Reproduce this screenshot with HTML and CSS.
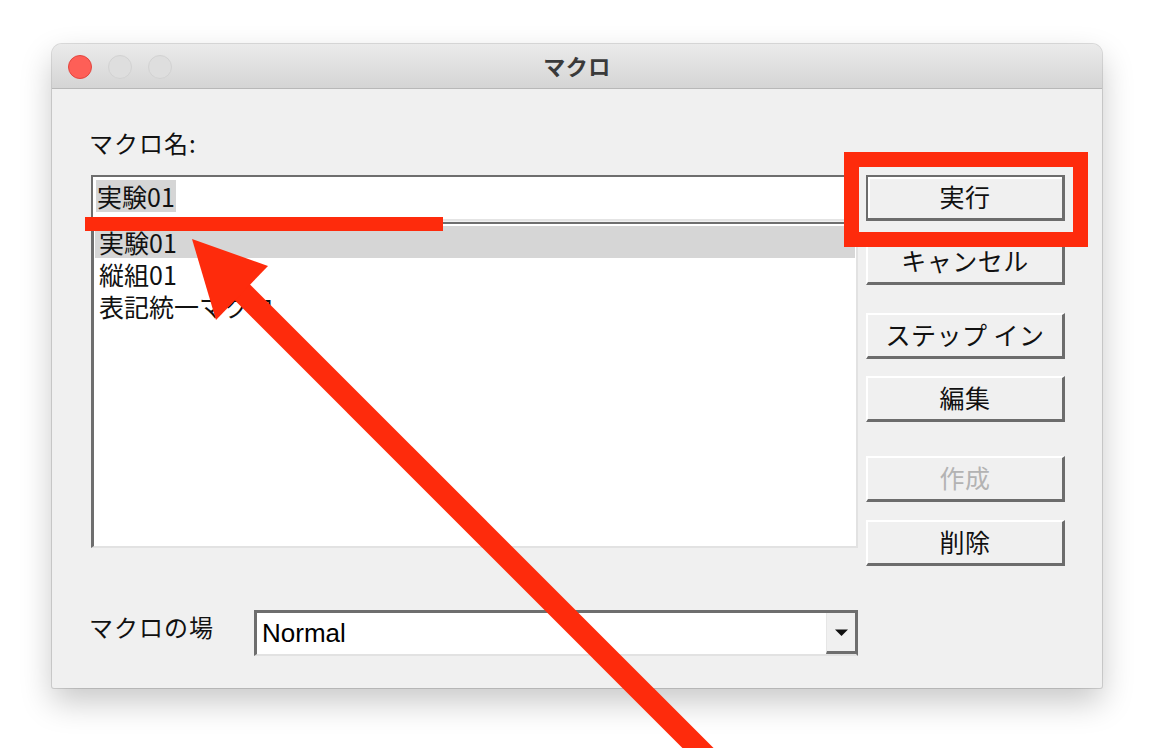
FILE: index.html
```html
<!DOCTYPE html>
<html lang="ja">
<head>
<meta charset="utf-8">
<title>マクロ</title>
<link rel="stylesheet" href="styles.css">
</head>
<body>
<div class="stage">
  <div class="window">
    <div class="titlebar">
      <div class="lights">
        <span class="light close"></span>
        <span class="light"></span>
        <span class="light"></span>
      </div>
      <div class="title">マクロ</div>
      <div class="spacer"></div>
    </div>
    <div class="content">
      <div class="left">
        <div class="label name-label">マクロ名:</div>
        <div class="input"><span class="sel">実験01</span></div>
        <ul class="list">
          <li class="item selected">実験01</li>
          <li class="item">縦組01</li>
          <li class="item">表記統一マクロ</li>
        </ul>
        <div class="location">
          <div class="label loc-label">マクロの場</div>
          <div class="select">
            <span class="select-value">Normal</span>
            <span class="select-btn">
              <svg width="15" height="9" viewBox="0 0 15 9"><path d="M1 1.5 L14 1.5 L7.5 8 Z" fill="#111"/></svg>
            </span>
          </div>
        </div>
      </div>
      <div class="buttons">
        <button class="btn default b-run">実行</button>
        <button class="btn b-cancel">キャンセル</button>
        <button class="btn b-step">ステップ イン</button>
        <button class="btn b-edit">編集</button>
        <button class="btn disabled b-create">作成</button>
        <button class="btn b-delete">削除</button>
      </div>
    </div>
  </div>

  <div class="mark-box"></div>
  <div class="mark-line"></div>
  <svg class="arrow" width="1154" height="748" viewBox="0 0 1154 748">
    <line x1="236" y1="286" x2="740" y2="790" stroke="#fe2b0c" stroke-width="22"/>
    <polygon points="192,239 268,266 216,320" fill="#fe2b0c"/>
  </svg>
</div>
</body>
</html>
```

FILE: styles.css
```css
* { box-sizing: border-box; }

html, body {
  margin: 0;
  padding: 0;
  background: #ffffff;
}

body {
  font-family: "Noto Sans CJK JP", "Liberation Sans", sans-serif;
  color: #111;
}

.stage {
  position: relative;
  width: 1154px;
  height: 748px;
  overflow: hidden;
  padding: 44px 0 0 52px;
}

.window {
  width: 1050px;
  height: 644px;
  background: #f0f0f0;
  border-radius: 10px 10px 2px 2px;
  box-shadow: 0 0 0 1px rgba(0, 0, 0, 0.13), 0 14px 32px rgba(0, 0, 0, 0.22);
  overflow: hidden;
}

.titlebar {
  height: 45px;
  display: grid;
  grid-template-columns: 1fr auto 1fr;
  align-items: center;
  background: linear-gradient(#ebebeb, #d5d5d5);
  border-bottom: 1px solid #b8b8b8;
}

.lights {
  display: flex;
  gap: 16px;
  padding-left: 16px;
  padding-top: 1px;
}

.light {
  width: 24px;
  height: 24px;
  border-radius: 50%;
  background: #dedede;
  border: 1px solid #d2d2d2;
}

.light.close {
  background: #fe5f57;
  border-color: #e2463f;
}

.title {
  font-size: 22px;
  font-weight: 700;
  color: #3a3a3a;
  letter-spacing: 0.5px;
  padding-bottom: 2px;
}

.content {
  display: flex;
  gap: 8px;
  padding-left: 37px;
}

.left {
  width: 769px;
  display: flex;
  flex-direction: column;
}

.label {
  font-size: 24px;
  line-height: 30px;
  height: 30px;
  white-space: nowrap;
  color: #111;
}

.name-label {
  margin-top: 39px;
  letter-spacing: 1px;
}

.input {
  margin-top: 17px;
  margin-left: 2px;
  width: 767px;
  height: 46px;
  background: #fff;
  border-style: solid;
  border-width: 2px 1px 2px 2px;
  border-color: #6e6e6e #e4e4e4 #e4e4e4 #6e6e6e;
  padding: 3px 0 0 3px;
}

.sel {
  display: inline-block;
  background: #d5d5d5;
  font-size: 25px;
  line-height: 32px;
  height: 32px;
  padding: 0 1px;
}

.list {
  list-style: none;
  margin: 1px 0 0 2px;
  padding: 2px 1px 0 1px;
  width: 767px;
  height: 326px;
  background: #fff;
  border-style: solid;
  border-width: 2px 2px 2px 3px;
  border-color: #6e6e6e #e2e2e2 #e2e2e2 #6e6e6e;
}

.item {
  height: 32px;
  line-height: 32px;
  font-size: 25px;
  padding-left: 4px;
}

.item.selected {
  background: #d6d6d6;
}

.location {
  margin-top: 62px;
  display: flex;
  justify-content: space-between;
  align-items: flex-start;
}

.loc-label {
  line-height: 34px;
  height: 36px;
  letter-spacing: 1px;
}

.select {
  width: 604px;
  height: 46px;
  display: flex;
  align-items: stretch;
  background: #fff;
  border-style: solid;
  border-width: 3px 2px 2px 3px;
  border-color: #6e6e6e #6e6e6e #e2e2e2 #6e6e6e;
}

.select-value {
  flex: 1;
  font-family: "Liberation Sans", Arial, sans-serif;
  font-size: 26px;
  line-height: 41px;
  padding-left: 5px;
  color: #000;
}

.select-btn {
  width: 30px;
  display: flex;
  align-items: center;
  justify-content: center;
  background: #f0f0f0;
  border-style: solid;
  border-width: 0 1px 3px 1px;
  border-color: #fff #6e6e6e #6e6e6e #e6e6e6;
}

.buttons {
  width: 199px;
  display: flex;
  flex-direction: column;
  padding-top: 86px;
}

.btn {
  width: 199px;
  height: 46px;
  padding: 0 0 3px 0;
  font-family: "Noto Sans CJK JP", sans-serif;
  font-size: 25px;
  line-height: 1;
  color: #111;
  background: #f0f0f0;
  border-style: solid;
  border-width: 2px 3px 3px 2px;
  border-color: #ffffff #6c6c6c #6c6c6c #ffffff;
  letter-spacing: 0.5px;
}

.btn.default {
  border-color: #6c6c6c;
  box-shadow: inset 2px 2px 0 #ffffff;
}

.btn.disabled {
  color: #b3b3b3;
}

.b-cancel { margin-top: 18px; }
.b-step { margin-top: 28px; }
.b-edit { margin-top: 17px; }
.b-create { margin-top: 34px; }
.b-delete { margin-top: 18px; }

.mark-box {
  position: absolute;
  left: 844px;
  top: 152px;
  width: 244px;
  height: 95px;
  border: 15px solid #fe2b0c;
}

.mark-line {
  position: absolute;
  left: 85px;
  top: 217px;
  width: 358px;
  height: 14px;
  background: #fe2b0c;
}

.arrow {
  position: absolute;
  left: 0;
  top: 0;
}
```
